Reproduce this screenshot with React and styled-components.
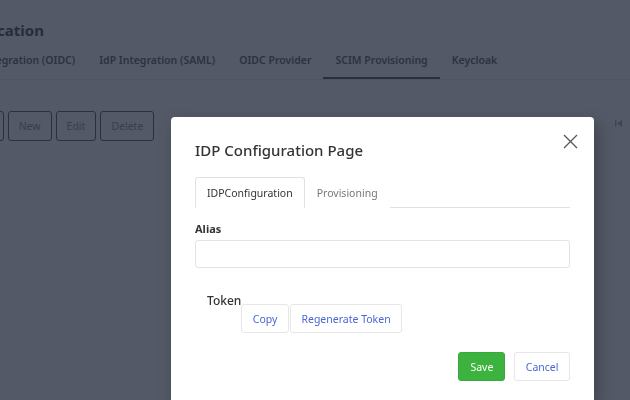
import React from "react";
import styled, { createGlobalStyle } from "styled-components";

const GlobalStyle = createGlobalStyle`
  html, body {
    margin: 0;
    padding: 0;
    background: #fff;
    overflow: hidden;
  }
  body {
    font-family: "Noto Sans", "Open Sans", sans-serif;
    color: #222;
  }
  * {
    box-sizing: border-box;
  }
`;

const pageTabs = [
  "IdP Integration (OIDC)",
  "IdP Integration (SAML)",
  "OIDC Provider",
  "SCIM Provisioning",
  "Keycloak",
];

export default function App() {
  return (
    <>
      <GlobalStyle />
      <Page>
        <Title>Authentication</Title>
        <TabBar>
          {pageTabs.map((t) => (
            <PageTab key={t} active={t === "SCIM Provisioning"}>
              {t}
            </PageTab>
          ))}
        </TabBar>
        <Toolbar>
          <ButtonGroup>
            <ToolButton>Add</ToolButton>
            <ToolButton>New</ToolButton>
            <ToolButton>Edit</ToolButton>
            <ToolButton>Delete</ToolButton>
          </ButtonGroup>
          <Pager>
            <svg width="7" height="7" viewBox="0 0 7 7">
              <rect x="0" y="0" width="1.4" height="7" fill="#999" />
              <polygon points="7,0 7,7 2,3.5" fill="#999" />
            </svg>
          </Pager>
        </Toolbar>
      </Page>

      <Overlay>
        <Modal>
          <CloseButton aria-label="Close">
            <svg width="15" height="15" viewBox="0 0 15 15">
              <path
                d="M1 1 L14 14 M14 1 L1 14"
                stroke="#555"
                strokeWidth="1.3"
                fill="none"
              />
            </svg>
          </CloseButton>
          <ModalTitle>IDP Configuration Page</ModalTitle>
          <InnerTabs>
            <InnerTab active>IDPConfiguration</InnerTab>
            <InnerTab>Provisioning</InnerTab>
          </InnerTabs>
          <FieldLabel>Alias</FieldLabel>
          <TextInput />
          <TokenRow>
            <TokenLabel>Token</TokenLabel>
            <TokenActions>
              <LightButton>Copy</LightButton>
              <LightButton>Regenerate Token</LightButton>
            </TokenActions>
          </TokenRow>
          <Footer>
            <LightButton primary>Save</LightButton>
            <LightButton>Cancel</LightButton>
          </Footer>
        </Modal>
      </Overlay>
    </>
  );
}

const Page = styled.div`
  margin-left: -76px;
  width: calc(100vw + 76px);
  padding-top: 20px;
`;

const Title = styled.h2`
  margin: 0;
  padding-left: 7px;
  font-size: 15px;
  line-height: 20px;
  font-weight: 700;
  color: #222;
`;

const TabBar = styled.div`
  display: flex;
  margin-top: 2px;
  padding-left: 25px;
  border-bottom: 1px solid #e1e1e1;
`;

const PageTab = styled.div`
  padding: 10px 12px 9px;
  font-size: 10.5px;
  line-height: 16px;
  font-weight: 600;
  color: #3c3c3c;
  border-bottom: 2px solid ${(p) => (p.active ? "#2a2f3a" : "transparent")};
  white-space: nowrap;
`;

const Toolbar = styled.div`
  display: flex;
  justify-content: space-between;
  align-items: flex-start;
  margin-top: 31px;
  padding-left: 38px;
`;

const ButtonGroup = styled.div`
  display: flex;
  gap: 4px;
`;

const ToolButton = styled.button`
  height: 30px;
  padding: 0 10px;
  font-family: inherit;
  font-size: 10.5px;
  color: #7a7a7a;
  background: #fff;
  border: 1px solid #333;
  border-radius: 3px;
`;

const Pager = styled.div`
  margin-top: 9px;
  margin-right: 8px;
  display: flex;
`;

const Overlay = styled.div`
  position: fixed;
  inset: 0;
  background: rgba(40, 48, 64, 0.8);
  padding: 117px 0 0 171px;
`;

const Modal = styled.div`
  position: relative;
  width: 423px;
  background: #fff;
  border-radius: 4px;
  padding: 23px 24px 24px;
  box-shadow: 4px 6px 16px rgba(0, 0, 0, 0.25);
`;

const CloseButton = styled.button`
  position: absolute;
  top: 17px;
  right: 16px;
  padding: 0;
  border: none;
  background: none;
  display: flex;
`;

const ModalTitle = styled.h3`
  margin: 0;
  font-size: 15px;
  line-height: 20px;
  font-weight: 500;
  color: #333;
`;

const InnerTabs = styled.div`
  display: flex;
  margin-top: 17px;
  border-bottom: 1px solid #dee2e6;
`;

const InnerTab = styled.div`
  height: 31px;
  margin-bottom: -1px;
  padding: 0 11px;
  display: flex;
  align-items: center;
  font-size: 10.5px;
  color: ${(p) => (p.active ? "#333" : "#777")};
  background: #fff;
  border: 1px solid ${(p) => (p.active ? "#dee2e6" : "transparent")};
  border-bottom-color: ${(p) => (p.active ? "#fff" : "transparent")};
  border-radius: 3px 3px 0 0;
`;

const FieldLabel = styled.div`
  margin-top: 13px;
  font-size: 11px;
  line-height: 16px;
  font-weight: 700;
  color: #333;
`;

const TextInput = styled.input`
  display: block;
  width: 100%;
  height: 28px;
  margin-top: 3px;
  border: 1px solid #e3e3e3;
  border-radius: 3px;
  outline: none;
`;

const TokenRow = styled.div`
  display: flex;
  align-items: flex-start;
  margin-top: 25px;
`;

const TokenLabel = styled.div`
  padding-left: 12px;
  font-size: 12px;
  line-height: 16px;
  font-weight: 500;
  color: #333;
`;

const TokenActions = styled.div`
  display: flex;
  gap: 1px;
  margin-top: 11px;
`;

const LightButton = styled.button`
  height: 29px;
  padding: 0 ${(p) => (p.primary ? "11px" : "10.5px")};
  font-family: inherit;
  font-size: 10.5px;
  color: ${(p) => (p.primary ? "#fff" : "#4a67d6")};
  background: ${(p) => (p.primary ? "#3db33f" : "#fff")};
  border: 1px solid ${(p) => (p.primary ? "#3aa83c" : "#e6e6e6")};
  border-radius: 3px;
`;

const Footer = styled.div`
  display: flex;
  justify-content: flex-end;
  gap: 9px;
  margin-top: 19px;
`;
